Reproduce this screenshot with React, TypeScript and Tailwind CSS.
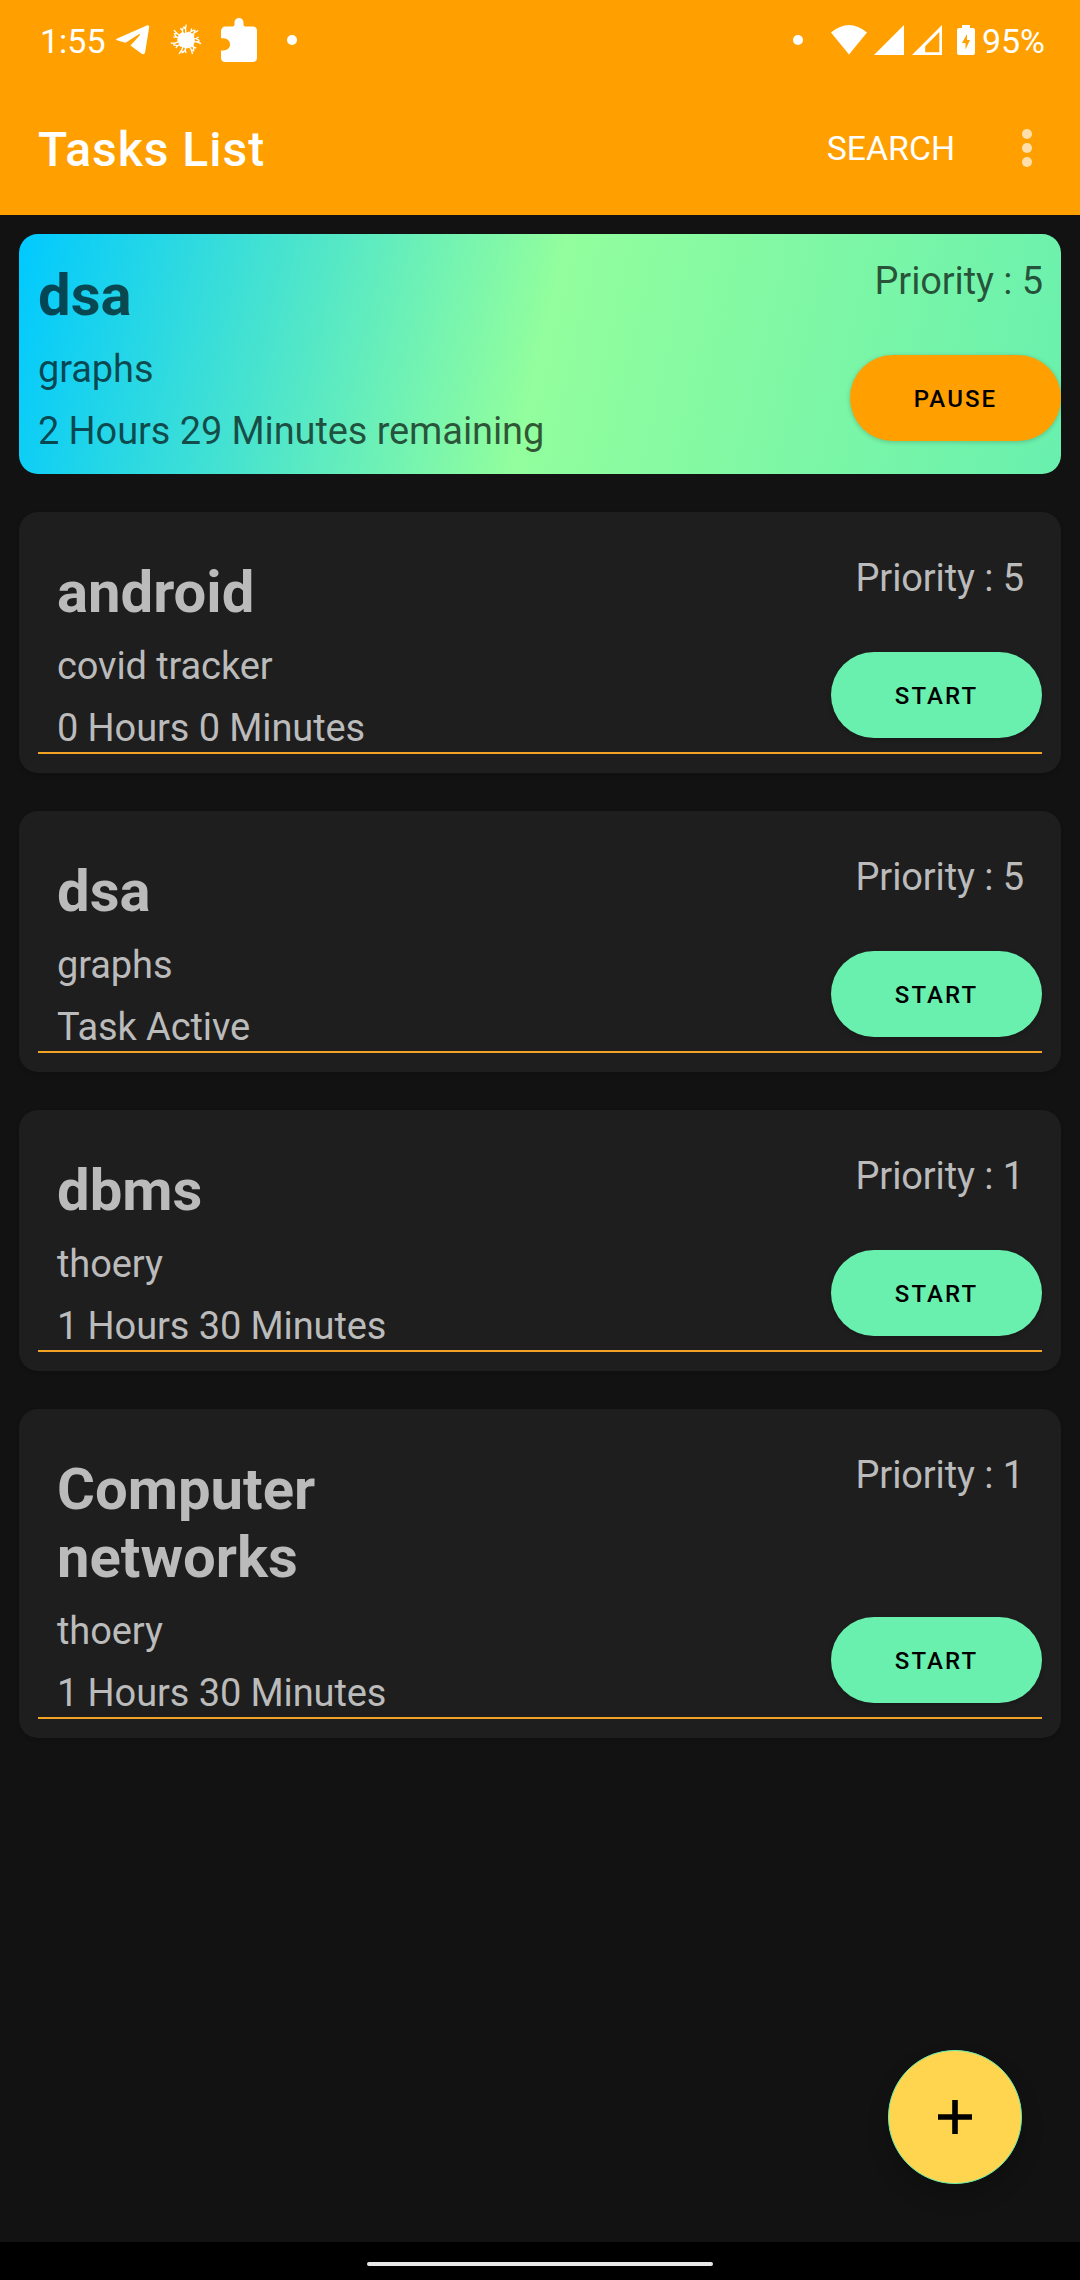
import React from "react";

type Task = {
  title: string;
  note: string;
  time: string;
  priority: number;
};

const tasks: Task[] = [
  { title: "android", note: "covid tracker", time: "0 Hours 0 Minutes", priority: 5 },
  { title: "dsa", note: "graphs", time: "Task Active", priority: 5 },
  { title: "dbms", note: "thoery", time: "1 Hours 30 Minutes", priority: 1 },
  { title: "Computer networks", note: "thoery", time: "1 Hours 30 Minutes", priority: 1 },
];

function TelegramIcon() {
  return (
    <svg className="ml-[12px] h-[30px] w-[34px]" viewBox="0 0 34 30" fill="white">
      <path d="M1.200 13.400 30.800.4c1.500-.6 2.600.2 2.300 2.100l-4 24.700c-.4 2-1.800 2.500-3.400 1.500L14.500 20.500 23.800 10.200c.6-.8-.1-1.400-.9-.9L9.500 17.800.9 15.300C-.3 14.900-.1 14 1.200 13.400Z" />
    </svg>
  );
}

function VirusIcon() {
  const spikes = Array.from({ length: 14 }, (_, i) => (i * 360) / 14);
  return (
    <svg className="ml-[20px] h-[32px] w-[32px]" viewBox="-16 -16 32 32" fill="white" stroke="white">
      <path
        d="M-7-5-4-7.500-1-6.500 3-8 6-6 8-5.500 7.500-2 8.500 1 7.500 4 7 6.500 4 7 1 8-3 7-6 6-7 3-8.500 0Z"
        strokeWidth="0.8"
        strokeLinejoin="round"
      />
      {spikes.map((a, i) => (
        <path
          key={a}
          d={i % 2 ? "M0-6 .8-10 0-13M.8-10 3-12.500" : "M0-6-.5-11 .2-15.500M-.5-11-2.500-13.500"}
          transform={`rotate(${a})`}
          fill="none"
          strokeWidth="1.300"
        />
      ))}
    </svg>
  );
}

function PuzzleIcon() {
  return (
    <svg className="ml-[19px] h-[44px] w-[36px]" viewBox="0 0 36 44" fill="white">
      <path d="M0 13.500C0 10.500 1.500 8.500 4.500 8.500H11.500Q13.500 8.500 13.500 6.500V4.500A4.500 4.500 0 0 1 22.500 4.500V6.500Q22.500 8.500 24.500 8.500H31.500Q36 8.500 36 12.500V39.500Q36 44 31.500 44H4.500Q0 44 0 39.500V32.500H2.500A6.500 6 0 0 0 2.500 20.300H0Z" />
    </svg>
  );
}

function StatusBar() {
  return (
    <div className="flex h-[80px] items-center pl-[40px] pr-[35px] text-[34px] text-white">
      <span className="w-[64px] whitespace-nowrap pt-[2px]">1:55</span>
      <TelegramIcon />
      <VirusIcon />
      <PuzzleIcon />
      <span className="ml-[30px] size-[10px] rounded-full bg-white" />
      <span className="ml-auto size-[10px] rounded-full bg-white" />
      <svg className="ml-[28px] h-[30px] w-[36px]" viewBox="0 0 36 30" fill="white">
        <path d="M0 7.500Q18-7.500 36 7.500L18 29.500Z" />
      </svg>
      <svg className="ml-[7px] h-[30px] w-[30px]" viewBox="0 0 30 30" fill="white">
        <path d="M30 0V30H0Z" />
      </svg>
      <svg className="ml-[8px] h-[30px] w-[30px]" viewBox="0 0 30 30" fill="white">
        <path fillRule="evenodd" d="M30 0V30H0ZM27.300 7V27.200H13.200V21.300Z" />
      </svg>
      <svg className="ml-[15px] h-[30px] w-[18px]" viewBox="0 0 18 30" fill="white">
        <path
          fillRule="evenodd"
          d="M5 0H13V3H16Q18 3 18 5V28Q18 30 16 30H2Q0 30 0 28V5Q0 3 2 3H5ZM10 9 5 18H8.500V24.500L13 15H10Z"
        />
      </svg>
      <span className="ml-[7px] whitespace-nowrap pt-[2px]">95%</span>
    </div>
  );
}

function AppBar() {
  return (
    <div className="flex h-[135px] items-center pl-[38px] pr-[48px] text-white">
      <h1 className="pt-[4px] text-[48px] font-medium tracking-[1px]">Tasks List</h1>
      <span className="ml-auto pt-[3px] text-[33.800px]">SEARCH</span>
      <div className="ml-[67px] flex flex-col gap-[4px]">
        <span className="size-[10px] rounded-full bg-[#ffe0ad]" />
        <span className="size-[10px] rounded-full bg-[#ffe0ad]" />
        <span className="size-[10px] rounded-full bg-[#ffe0ad]" />
      </div>
    </div>
  );
}

function TaskInfo({ title, note, time }: { title: string; note: string; time: string }) {
  return (
    <div className="w-[560px]">
      <h2 className="max-w-[330px] text-[58px] leading-[68px] font-bold">{title}</h2>
      <p className="mt-[18px] text-[38px] leading-[45px] tracking-[-0.100px]">{note}</p>
      <p className="mt-[17px] text-[38px] leading-[45px] tracking-[-0.100px]">{time}</p>
    </div>
  );
}

function ActiveCard() {
  return (
    <section className="flex h-[240px] justify-between overflow-hidden rounded-[19px] bg-[linear-gradient(103deg,#00c9ff,#92fe9d_50%,#69f0ae)] text-black/66">
      <div className="pt-[27px] pl-[19px]">
        <TaskInfo title="dsa" note="graphs" time="2 Hours 29 Minutes remaining" />
      </div>
      <div className="flex flex-col items-end justify-between pt-[25px] pb-[33px]">
        <p className="pr-[18px] text-[38px] leading-[45px] tracking-[-0.100px]">Priority : 5</p>
        <button className="h-[86px] w-[211px] rounded-full bg-[#ffa000] pt-[2px] text-[24px] font-medium tracking-[2.100px] text-black shadow-[0_1px_5px_rgba(0,0,0,0.2)]">
          PAUSE
        </button>
      </div>
    </section>
  );
}

function TaskCard({ task }: { task: Task }) {
  return (
    <section className="rounded-[19px] bg-[#1e1e1e] p-[19px] text-[#bbbbbb] shadow-[0_2px_4px_rgba(0,0,0,0.15)]">
      <div className="flex justify-between border-b-2 border-[#f2a224]">
        <div className="pt-[27px] pb-[1px] pl-[19px]">
          <TaskInfo title={task.title} note={task.note} time={task.time} />
        </div>
        <div className="flex flex-col items-end justify-between pt-[25px] pb-[14px]">
          <p className="pr-[18px] text-[38px] leading-[45px] tracking-[-0.100px]">Priority : {task.priority}</p>
          <button className="h-[86px] w-[211px] rounded-full bg-[#69f0ae] pt-[2px] text-[24px] font-medium tracking-[2.100px] text-black shadow-[0_2px_5px_rgba(0,0,0,0.2)]">
            START
          </button>
        </div>
      </div>
    </section>
  );
}

export default function App() {
  return (
    <div className="relative flex h-[2280px] w-[1080px] flex-col overflow-hidden bg-[#121212] font-[Roboto,sans-serif]">
      <header className="h-[215px] bg-[#ffa000]">
        <StatusBar />
        <AppBar />
      </header>
      <main className="flex flex-1 flex-col gap-[38px] p-[19px]">
        <ActiveCard />
        {tasks.map((task) => (
          <TaskCard key={task.title} task={task} />
        ))}
      </main>
      <button className="absolute right-[58px] bottom-[96px] flex size-[134px] items-center justify-center rounded-full border border-[#69f0ae] bg-[#ffd54f] shadow-[0_12px_22px_rgba(0,0,0,0.2)]">
        <svg className="size-[34px]" viewBox="0 0 34 34" fill="black">
          <path d="M14.200 0H19.800V14.200H34V19.800H19.800V34H14.200V19.800H0V14.200H14.200Z" />
        </svg>
      </button>
      <footer className="flex h-[38px] justify-center bg-black pt-[20px]">
        <div className="h-[4px] w-[346px] rounded-full bg-[#e8e8e8]" />
      </footer>
    </div>
  );
}
